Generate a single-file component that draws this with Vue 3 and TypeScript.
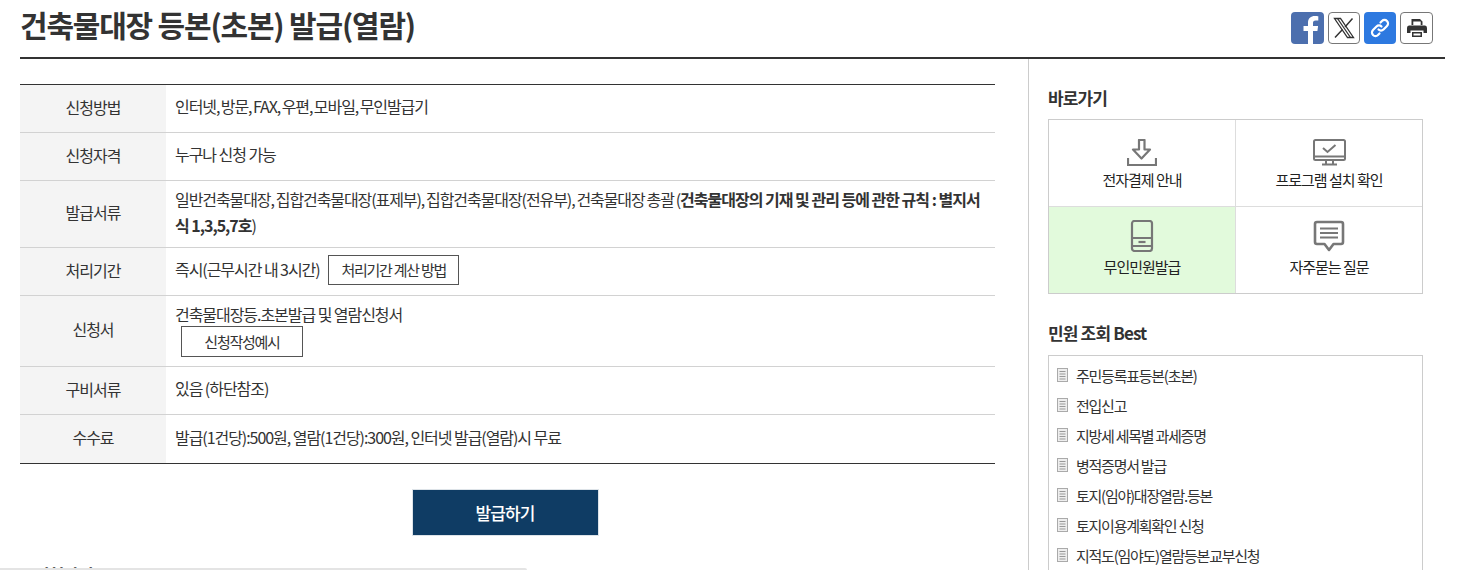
<script setup lang="ts">
const popular: string[] = ['주민등록표등본(초본)','전입신고','지방세 세목별 과세증명','병적증명서 발급','토지(임야)대장열람.등본','토지이용계획확인 신청','지적도(임야도)열람등본교부신청'];
</script>

<template>
  <div class="page">
    <header class="head">
      <h1>건축물대장 등본(초본) 발급(열람)</h1>
      <div class="share">
        <span class="sb fb"><svg width="33" height="32" viewBox="0 0 33 32"><path d="M22 32V19h4.400l.7-5H22v-3c0-1.500.6-2.500 2.700-2.500H27.300V4.200C26.700 4.100 25.300 4 23.800 4 20 4 17 6.300 17 10.500V14h-4.500v5H17v13z" fill="#fff"/></svg></span>
        <span class="sb line narrow"><svg width="24" height="24" viewBox="0 0 24 24"><path d="M2.500 2.500h6l13 19h-6z" fill="none" stroke="#333" stroke-width="1.300"/><path d="M5.500 2.500l13 19" stroke="#333" stroke-width="1.300"/><path d="M20.500 2.500l-7.500 8.500M10.500 13.500L3 21.500" stroke="#333" stroke-width="1.500" fill="none"/></svg></span>
        <span class="sb lk narrow"><svg width="24" height="24" viewBox="0 0 24 24" fill="none" stroke="#fff" stroke-width="2.200" stroke-linecap="round"><path d="M10.500 13.500a3.500 3.500 0 0 0 5 0l3.500-3.500a3.500 3.500 0 0 0-5-5l-1.500 1.500"/><path d="M13.500 10.500a3.500 3.500 0 0 0-5 0L5 14a3.500 3.500 0 0 0 5 5l1.500-1.500"/></svg></span>
        <span class="sb line"><svg width="22" height="20" viewBox="0 0 22 20"><path d="M5.500 7V1h8.500l2.500 2.500V7h-1.800V3.500H7.300V7z" fill="#333"/><path d="M3 7.500h16a2.500 2.500 0 0 1 2 2.500v5h-3.500v-2.500h-13V15H1v-5a2.500 2.500 0 0 1 2-2.500z" fill="#333"/><path d="M6 14h10v5H6z" fill="#333"/><path d="M7.500 15.500h7v2h-7z" fill="#fff"/></svg></span>
      </div>
    </header>

    <div class="body">
      <main class="main">
        <table class="info">
          <tbody>
            <tr class="r48"><th>신청방법</th><td class="tight">인터넷, 방문, FAX, 우편, 모바일, 무인발급기</td></tr>
            <tr class="r48"><th>신청자격</th><td>누구나 신청 가능</td></tr>
            <tr class="r67"><th>발급서류</th><td class="tight2">일반건축물대장, 집합건축물대장(표제부), 집합건축물대장(전유부), 건축물대장 총괄 (<b>건축물대장의 기재 및 관리 등에 관한 규칙 : 별지서식 1,3,5,7호</b>)</td></tr>
            <tr class="r48"><th>처리기간</th><td><span class="inl">즉시(근무시간 내 3시간) <span class="tb tb1">처리기간 계산 방법</span></span></td></tr>
            <tr class="r71"><th>신청서</th><td class="form"><div>건축물대장등.초본발급 및 열람신청서</div><span class="tb tb2">신청작성예시</span></td></tr>
            <tr class="r48"><th>구비서류</th><td>있음 (하단참조)</td></tr>
            <tr class="r48"><th>수수료</th><td>발급(1건당):500원, 열람(1건당):300원, 인터넷 발급(열람)시 무료</td></tr>
          </tbody>
        </table>
        <div class="actions"><button class="issue" type="button">발급하기</button></div>
        <div class="cut">신청방법</div>
      </main>

      <aside class="side">
        <h2>바로가기</h2>
        <div class="quick">
          <a class="q">
            <svg width="30" height="28" viewBox="0 0 30 28" fill="none" stroke="#777" stroke-width="2.200"><path d="M12 1h5.500v9.500H23l-8.500 9-8.500-9h6z" stroke-linejoin="round"/><path d="M1 19v7h28v-7" /></svg>
            <span>전자결제 안내</span>
          </a>
          <a class="q">
            <svg width="33" height="27" viewBox="0 0 33 27" fill="none" stroke="#777" stroke-width="2"><rect x="1" y="1" width="31" height="20" rx="1.500"/><path d="M1 17.500h31" /><path d="M10 9l4.500 4 8-7"/><path d="M13 21v4M20 21v4M9 25.500h15"/></svg>
            <span>프로그램 설치 확인</span>
          </a>
          <a class="q on">
            <svg width="24" height="32" viewBox="0 0 24 32" fill="none" stroke="#777" stroke-width="2.200"><rect x="2" y="1" width="20" height="30" rx="2.500"/><path d="M2 18h20M2 26h20"/><path d="M8.500 22h7"/></svg>
            <span>무인민원발급</span>
          </a>
          <a class="q">
            <svg width="32" height="32" viewBox="0 0 32 32" fill="none" stroke="#777" stroke-width="2.600"><path d="M4 2h24a2 2 0 0 1 2 2v18a2 2 0 0 1-2 2h-7.500L16 30l-4.500-6H4a2 2 0 0 1-2-2V4a2 2 0 0 1 2-2z" stroke-linejoin="round"/><path d="M7 8.500h18M7 13h18M7 17.500h18" stroke-width="2"/></svg>
            <span>자주묻는 질문</span>
          </a>
        </div>

        <h2 class="h-best">민원 조회 Best</h2>
        <ul class="best">
          <li v-for="p in popular" :key="p">
            <svg width="11" height="14" viewBox="0 0 11 14"><rect x="0.500" y="0.500" width="10" height="13" fill="#eee" stroke="#aaa"/><path d="M2.500 3.500h6M2.500 6h6M2.500 8.500h6M2.500 11h6" stroke="#999"/></svg>
            <span>{{ p }}</span>
          </li>
        </ul>
      </aside>
    </div>
    <div class="hbar"></div>
  </div>
</template>

<style>
html, body { margin: 0; background: #fff; overflow: hidden; }
</style>

<style scoped>
.page { position: relative; width: 1468px; height: 570px; overflow: hidden; font-family: "Noto Sans CJK KR", "Noto Sans", sans-serif; color: #333; letter-spacing: -1px; }
.head { box-sizing: border-box; margin: 0 23px 0 20px; height: 59px; border-bottom: 2px solid #333; display: flex; justify-content: space-between; align-items: flex-start; }
h1 { margin: 0; font-size: 30px; line-height: 48px; font-weight: 700; letter-spacing: -0.04em; }
.share { display: flex; gap: 4px; margin: 12px 12px 0 0; }
.sb { box-sizing: border-box; width: 33px; height: 32px; border-radius: 4px; display: flex; align-items: center; justify-content: center; overflow: hidden; }
.narrow { width: 32px; }
.fb { background: #4c6fae; }
.lk { background: #2d79e0; }
.line { border: 1px solid #777; background: #fff; }
.body { display: flex; align-items: stretch; }
.main { width: 1009px; box-sizing: border-box; padding: 25px 33px 0 0; margin-left: 20px; border-right: 1px solid #ccc; height: 511px; }
.info { width: 975px; border-collapse: collapse; border-top: 1px solid #333; border-bottom: 1px solid #333; table-layout: fixed; font-size: 16px; }
.info tr + tr { border-top: 1px solid #d2d2d2; }
.info b { letter-spacing: -1px; word-spacing: 0; }
.r48 { height: 48px; }
.r67 { height: 67px; }
.r71 { height: 71px; }
.info tr:last-child { height: 49px; }
th { width: 146px; background: #f4f4f4; font-weight: 400; text-align: center; padding: 0 0 4px; }
td { padding: 0 10px 5px 9px; line-height: 26px; letter-spacing: -1.050px; }
td.tight { word-spacing: -1px; letter-spacing: -1.080px; }
td.tight2 { word-spacing: -0.600px; letter-spacing: -1.080px; }
.inl { display: block; margin-top: 2px; }
.tb { display: inline-block; box-sizing: border-box; border: 1px solid #555; text-align: center; font-size: 15px; line-height: 28px; height: 30px; letter-spacing: -1.250px; }
.tb1 { width: 131px; margin-left: 6px; }
.tb2 { width: 122px; height: 31px; margin-left: 6px; line-height: 29px; display: block; }
td.form { line-height: 24px; padding-bottom: 2px; }
.form div { margin-top: -1px; }
.actions { display: flex; justify-content: center; margin-top: 25px; }
.issue { width: 187px; height: 47px; margin-left: -5px; background: #0f3c64; color: #fff; border: 1px solid #dde3e8; font: 500 17px "Noto Sans CJK KR", sans-serif; letter-spacing: -0.05em; padding: 0; }
.cut { margin: 29px 0 0 14px; font-size: 17px; font-weight: 700; line-height: 20px; }
.side { padding-left: 19px; width: 375px; }
h2 { margin: 0; font-size: 17px; font-weight: 700; line-height: 24px; padding-top: 27px; letter-spacing: -0.05em; }
.quick { margin-top: 9px; box-sizing: border-box; width: 375px; height: 175px; border: 1px solid #ccc; display: grid; grid-template-columns: 187px 186px; grid-template-rows: 87px 86px; }
.q { display: flex; flex-direction: column; align-items: center; justify-content: flex-start; padding-top: 19px; box-sizing: border-box; font-size: 15px; color: #222; position: relative; }
.q:nth-child(odd) { border-right: 1px solid #ddd; }
.q:nth-child(-n+2) { border-bottom: 1px solid #ddd; }
.q span { position: absolute; top: 50px; line-height: 20px; }
.q svg { display: block; }
.q:nth-child(n+3) { padding-top: 13px; }
.q:nth-child(n+3) span { top: 50px; }
.on { background: #e2fadc; }
.h-best { padding-top: 0; margin-top: 27px; }
.best { list-style: none; margin: 10px 0 0; padding: 4px 0 0 8px; width: 375px; box-sizing: border-box; border: 1px solid #ccc; height: 300px; font-size: 15px; letter-spacing: -1.250px; }
.best li { display: flex; align-items: center; gap: 8px; height: 30px; }
.hbar { position: absolute; left: 0; bottom: 0; width: 527px; height: 2px; background: #e4e4e4; border-radius: 0 2px 0 0; }
</style>
